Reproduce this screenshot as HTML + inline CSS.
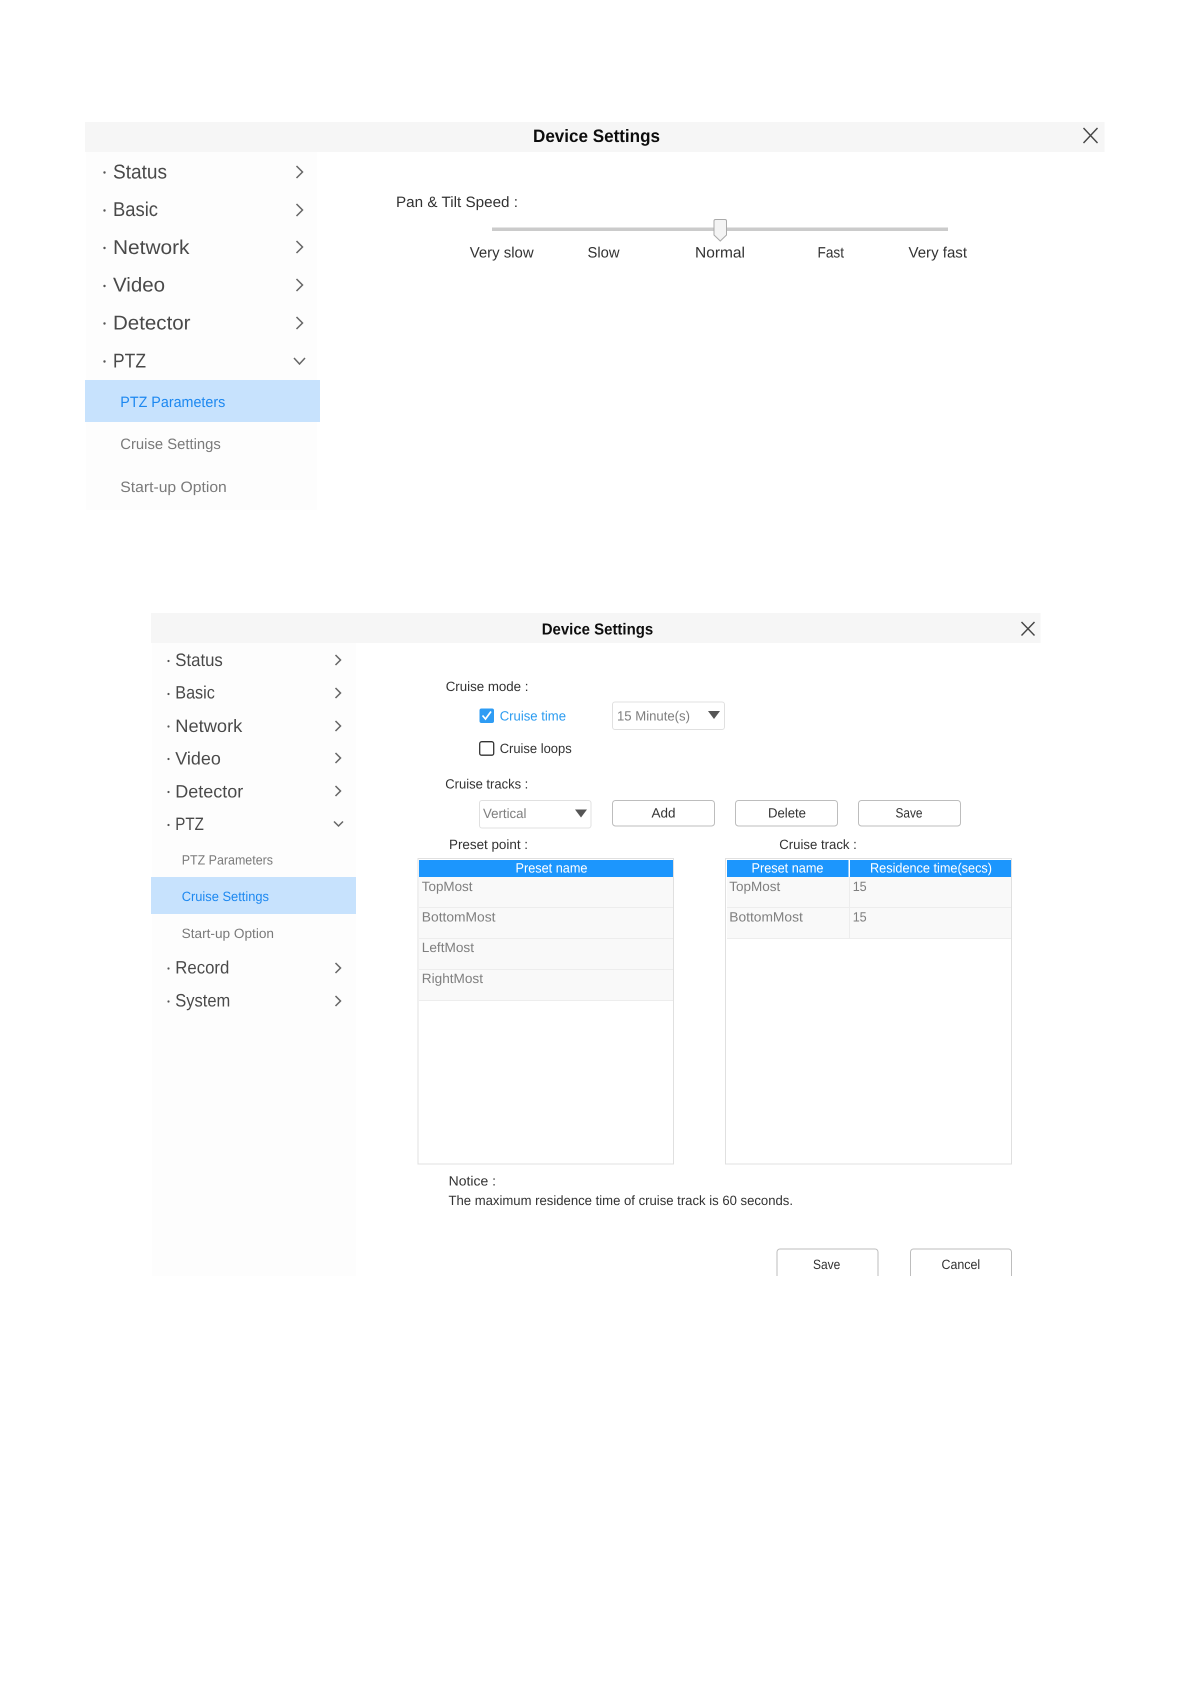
<!DOCTYPE html>
<html lang="en">
<head>
<meta charset="utf-8">
<title>Device Settings</title>
<style>
html,body{margin:0;padding:0;background:#fff;width:1191px;height:1684px;overflow:hidden}
svg{display:block}
text{font-family:"Liberation Sans",sans-serif;text-rendering:geometricPrecision}
.nav{font-size:20px;fill:#4a4a4a}
.nav2{font-size:18px;fill:#4a4a4a}
.dot{fill:#555}
.sub{font-size:15px;fill:#7a7a7a}
.sub2{font-size:13.5px;fill:#7a7a7a}
.lab{font-size:15px;fill:#333}
.lab2{font-size:13.5px;fill:#333}
.cell{font-size:13.5px;fill:#7f7f7f}
.th{font-size:13.5px;fill:#fff}
.title{font-weight:bold;fill:#111}
.chev{fill:none;stroke:#666;stroke-width:1.5}
.x{fill:none;stroke:#444;stroke-width:1.4}
</style>
</head>
<body>
<svg width="1191" height="1684" viewBox="0 0 1191 1684" xmlns="http://www.w3.org/2000/svg">
<defs><filter id="b" x="0" y="0" width="100%" height="100%"><feGaussianBlur stdDeviation="0.35"/></filter></defs>
<rect width="1191" height="1684" fill="#fff"/>
<g filter="url(#b)">
<!-- Panel 1 -->
<rect x="85" y="122" width="1019.500" height="30" fill="#f6f6f6"/>
<rect x="86" y="152" width="231" height="358" fill="#fdfdfd"/>
<text class="title" x="533" y="142" font-size="18" textLength="127" lengthAdjust="spacingAndGlyphs">Device Settings</text>
<path class="x" d="M1083.500 128L1097.500 143M1097.500 128L1083.500 143"/>
<g class="nav">
<text x="113" y="178.300" textLength="54" lengthAdjust="spacingAndGlyphs">Status</text>
<text x="113" y="216" textLength="45" lengthAdjust="spacingAndGlyphs">Basic</text>
<text x="113" y="254" textLength="76.500" lengthAdjust="spacingAndGlyphs">Network</text>
<text x="113" y="291.700" textLength="52" lengthAdjust="spacingAndGlyphs">Video</text>
<text x="113" y="329.500" textLength="77.500" lengthAdjust="spacingAndGlyphs">Detector</text>
<text x="113" y="367.500" textLength="33" lengthAdjust="spacingAndGlyphs">PTZ</text>
</g>
<g class="dot">
<circle cx="104.500" cy="172.500" r="1.200"/><circle cx="104.500" cy="210.500" r="1.200"/><circle cx="104.500" cy="248" r="1.200"/><circle cx="104.500" cy="286" r="1.200"/><circle cx="104.500" cy="323.500" r="1.200"/><circle cx="104.500" cy="361.500" r="1.200"/>
</g>
<path class="chev" d="M296.500 166L302.500 172L296.500 178M296.500 204L302.500 210L296.500 216M296.500 241L302.500 247L296.500 253M296.500 279L302.500 285L296.500 291M296.500 317L302.500 323L296.500 329M294 358L299.500 364L305 358"/>
<rect x="85" y="380" width="235" height="42" fill="#c7e2fd"/>
<text x="120.300" y="407" font-size="15" fill="#1e88f0" textLength="105" lengthAdjust="spacingAndGlyphs">PTZ Parameters</text>
<text class="sub" x="120.300" y="449" textLength="100.500" lengthAdjust="spacingAndGlyphs">Cruise Settings</text>
<text class="sub" x="120.300" y="492" textLength="106.500" lengthAdjust="spacingAndGlyphs">Start-up Option</text>
<text class="lab" x="396" y="207" textLength="122" lengthAdjust="spacingAndGlyphs">Pan &amp; Tilt Speed :</text>
<rect x="492" y="227.500" width="456" height="3.500" fill="#cbcbcb"/>
<path d="M715.500 219.500h9.500a1.500 1.500 0 0 1 1.500 1.500v14l-6.250 6-6.250-6v-14a1.500 1.500 0 0 1 1.500-1.500z" fill="#f4f4f4" stroke="#aaa" stroke-width="1"/>
<g class="lab">
<text x="469.700" y="257.500" textLength="64" lengthAdjust="spacingAndGlyphs">Very slow</text>
<text x="587.500" y="257.500" textLength="32" lengthAdjust="spacingAndGlyphs">Slow</text>
<text x="695" y="257.500" textLength="50" lengthAdjust="spacingAndGlyphs">Normal</text>
<text x="817.500" y="257.500" textLength="26.500" lengthAdjust="spacingAndGlyphs">Fast</text>
<text x="908.500" y="257.500" textLength="58.500" lengthAdjust="spacingAndGlyphs">Very fast</text>
</g>

<!-- Panel 2 -->
<rect x="151" y="613" width="889.500" height="30" fill="#f6f6f6"/>
<rect x="152" y="643" width="204" height="633" fill="#fdfdfd"/>
<text class="title" x="541.700" y="634.500" font-size="16" textLength="111.500" lengthAdjust="spacingAndGlyphs">Device Settings</text>
<path class="x" d="M1021.500 622L1034.500 635.500M1034.500 622L1021.500 635.500"/>
<g class="nav2">
<text x="175.300" y="666" textLength="47.500" lengthAdjust="spacingAndGlyphs">Status</text>
<text x="175.300" y="698.700" textLength="39.500" lengthAdjust="spacingAndGlyphs">Basic</text>
<text x="175.300" y="732" textLength="67" lengthAdjust="spacingAndGlyphs">Network</text>
<text x="175.300" y="764.300" textLength="45.500" lengthAdjust="spacingAndGlyphs">Video</text>
<text x="175.300" y="797.300" textLength="68" lengthAdjust="spacingAndGlyphs">Detector</text>
<text x="175.300" y="830" textLength="28.500" lengthAdjust="spacingAndGlyphs">PTZ</text>
<text x="175.300" y="973.700" textLength="54" lengthAdjust="spacingAndGlyphs">Record</text>
<text x="175.300" y="1006.500" textLength="55" lengthAdjust="spacingAndGlyphs">System</text>
</g>
<g class="dot">
<circle cx="168.500" cy="661" r="1.100"/><circle cx="168.500" cy="694" r="1.100"/><circle cx="168.500" cy="726.500" r="1.100"/><circle cx="168.500" cy="759" r="1.100"/><circle cx="168.500" cy="792" r="1.100"/><circle cx="168.500" cy="825" r="1.100"/><circle cx="168.500" cy="968.500" r="1.100"/><circle cx="168.500" cy="1001.500" r="1.100"/>
</g>
<path class="chev" d="M335.500 655L340.500 660L335.500 665M335.500 688L340.500 693L335.500 698M335.500 721L340.500 726L335.500 731M335.500 753L340.500 758L335.500 763M335.500 786L340.500 791L335.500 796M334 821.500L338.500 826L343 821.500M335.500 963L340.500 968L335.500 973M335.500 996L340.500 1001L335.500 1006"/>
<rect x="151" y="877" width="205" height="37" fill="#c7e2fd"/>
<text class="sub2" x="181.700" y="864.300" textLength="91.300" lengthAdjust="spacingAndGlyphs">PTZ Parameters</text>
<text x="181.700" y="901" font-size="13.500" fill="#1e88f0" textLength="87.300" lengthAdjust="spacingAndGlyphs">Cruise Settings</text>
<text class="sub2" x="181.700" y="938" textLength="92.300" lengthAdjust="spacingAndGlyphs">Start-up Option</text>

<g class="lab2">
<text x="445.700" y="691" textLength="82.800" lengthAdjust="spacingAndGlyphs">Cruise mode :</text>
<text x="499.700" y="753" textLength="72" lengthAdjust="spacingAndGlyphs">Cruise loops</text>
<text x="445.300" y="788.500" textLength="83" lengthAdjust="spacingAndGlyphs">Cruise tracks :</text>
<text x="449" y="849" textLength="79" lengthAdjust="spacingAndGlyphs">Preset point :</text>
<text x="779.300" y="849" textLength="77.500" lengthAdjust="spacingAndGlyphs">Cruise track :</text>
<text x="448.700" y="1185.500" textLength="47.300" lengthAdjust="spacingAndGlyphs">Notice :</text>
<text x="448.500" y="1205" textLength="344.500" lengthAdjust="spacingAndGlyphs">The maximum residence time of cruise track is 60 seconds.</text>
</g>
<rect x="479.500" y="708.500" width="14.500" height="14.500" rx="2" fill="#2d9cf4"/>
<path d="M482.500 715.500L485.500 719L491 711.500" fill="none" stroke="#fff" stroke-width="1.700"/>
<text x="499.700" y="720.500" font-size="13.500" fill="#2b9bf0" textLength="66.300" lengthAdjust="spacingAndGlyphs">Cruise time</text>
<rect x="479.700" y="741.700" width="14" height="13.500" rx="2" fill="#fff" stroke="#333" stroke-width="1.300"/>

<!-- selects -->
<rect x="612.500" y="702" width="112" height="27.500" rx="2.500" fill="#fff" stroke="#e0e0e0"/>
<text class="cell" x="617" y="720.500" textLength="73" lengthAdjust="spacingAndGlyphs">15 Minute(s)</text>
<path d="M708 711H720L714 719z" fill="#555"/>
<rect x="479.500" y="800.500" width="111.500" height="27.500" rx="2.500" fill="#fff" stroke="#e0e0e0"/>
<text class="cell" x="483" y="818" textLength="43.500" lengthAdjust="spacingAndGlyphs">Vertical</text>
<path d="M575 809.500H587L581 817.500z" fill="#555"/>

<!-- buttons -->
<g fill="#fff" stroke="#bdbdbd" stroke-width="1">
<rect x="612.500" y="800.500" width="102" height="25.500" rx="3"/>
<rect x="735.500" y="800.500" width="102" height="25.500" rx="3"/>
<rect x="858.500" y="800.500" width="102" height="25.500" rx="3"/>
</g>
<g class="lab2">
<text x="651.500" y="817.700" textLength="24" lengthAdjust="spacingAndGlyphs">Add</text>
<text x="768" y="817.700" textLength="38" lengthAdjust="spacingAndGlyphs">Delete</text>
<text x="895.500" y="817.700" textLength="27" lengthAdjust="spacingAndGlyphs">Save</text>
<text x="813" y="1269" textLength="27.300" lengthAdjust="spacingAndGlyphs">Save</text>
<text x="941.500" y="1269" textLength="38.700" lengthAdjust="spacingAndGlyphs">Cancel</text>
</g>

<!-- left table -->
<rect x="418" y="858.500" width="255.500" height="305.500" fill="#fff" stroke="#e0e0e0" stroke-width="1"/>
<rect x="419" y="860" width="254" height="17" fill="#1e96fd"/>
<rect x="419" y="877" width="254" height="123" fill="#f9f9f9"/>
<path d="M419 907.500H673M419 938.500H673M419 969.500H673M419 1000.500H673" stroke="#ededed" stroke-width="1" fill="none"/>
<text class="th" x="515.500" y="872.300" textLength="72" lengthAdjust="spacingAndGlyphs">Preset name</text>
<g class="cell">
<text x="421.800" y="891" textLength="50.700" lengthAdjust="spacingAndGlyphs">TopMost</text>
<text x="421.800" y="921.500" textLength="73.700" lengthAdjust="spacingAndGlyphs">BottomMost</text>
<text x="421.800" y="952" textLength="52.200" lengthAdjust="spacingAndGlyphs">LeftMost</text>
<text x="421.800" y="983" textLength="61.200" lengthAdjust="spacingAndGlyphs">RightMost</text>
</g>

<!-- right table -->
<rect x="725.500" y="858.500" width="286" height="305.500" fill="#fff" stroke="#e0e0e0" stroke-width="1"/>
<rect x="727" y="860" width="121.500" height="17" fill="#1e96fd"/>
<rect x="850" y="860" width="161" height="17" fill="#1e96fd"/>
<rect x="727" y="877" width="284" height="61" fill="#f9f9f9"/>
<path d="M727 907.500H1011M727 938.500H1011M849.500 877V938" stroke="#ededed" stroke-width="1" fill="none"/>
<text class="th" x="751.500" y="872.300" textLength="72" lengthAdjust="spacingAndGlyphs">Preset name</text>
<text class="th" x="870" y="872.300" textLength="122" lengthAdjust="spacingAndGlyphs">Residence time(secs)</text>
<g class="cell">
<text x="729.300" y="891" textLength="51" lengthAdjust="spacingAndGlyphs">TopMost</text>
<text x="729.300" y="921.500" textLength="73.500" lengthAdjust="spacingAndGlyphs">BottomMost</text>
<text x="852.700" y="891" textLength="14" lengthAdjust="spacingAndGlyphs">15</text>
<text x="852.700" y="921.500" textLength="14" lengthAdjust="spacingAndGlyphs">15</text>
</g>

<!-- bottom buttons clipped -->
<path d="M777 1276V1252a3 3 0 0 1 3-3H875a3 3 0 0 1 3 3V1276M910.500 1276V1252a3 3 0 0 1 3-3H1008.500a3 3 0 0 1 3 3V1276" fill="none" stroke="#bdbdbd"/>
</g>
</svg>
</body>
</html>
